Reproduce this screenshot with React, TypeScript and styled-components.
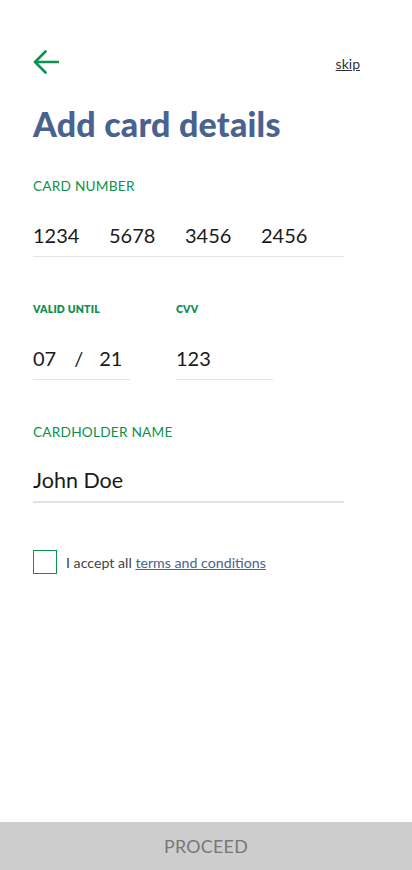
import styled, { createGlobalStyle } from "styled-components";

const GlobalStyle = createGlobalStyle`
  html, body {
    margin: 0;
    padding: 0;
    background: #fff;
  }
  body {
    font-family: Lato, "Noto Sans", sans-serif;
  }
`;

const Screen = styled.div`
  width: 412px;
  height: 870px;
  display: flex;
  flex-direction: column;
  background: #fff;
`;

const Content = styled.div`
  flex: 1;
  padding: 47px 52px 0 33px;
  display: flex;
  flex-direction: column;
`;

const TopBar = styled.div`
  display: flex;
  justify-content: space-between;
  align-items: center;
  height: 30px;
`;

const BackButton = styled.button`
  border: none;
  background: none;
  padding: 0;
  width: 26px;
  height: 26px;
  cursor: pointer;
  display: flex;
`;

const Skip = styled.a`
  font-size: 14px;
  color: #333;
  text-decoration: underline;
  margin-top: 2px;
`;

const Title = styled.h1`
  margin: 27px 0 0;
  font-size: 34px;
  font-weight: 900;
  color: #4a6290;
  letter-spacing: 0.2px;
  line-height: 40px;
`;

const Field = styled.div<{ $width?: number }>`
  display: flex;
  flex-direction: column;
  width: ${(p) => (p.$width ? `${p.$width}px` : "311px")};
`;

const Label = styled.div<{ $small?: boolean }>`
  color: #0b9150;
  font-size: ${(p) => (p.$small ? "10.5px" : "13.7px")};
  font-weight: ${(p) => (p.$small ? 800 : 400)};
  letter-spacing: 0.2px;
  line-height: 16px;
`;

const Value = styled.div<{ $thick?: boolean }>`
  display: flex;
  align-items: center;
  height: 41px;
  padding-bottom: 3px;
  margin-top: 22px;
  font-size: ${(p) => (p.$thick ? "21.5px" : "20px")};
  color: #1a1a1a;
  border-bottom: ${(p) => (p.$thick ? "2px solid #e2e2e2" : "1px solid #e5e5e5")};
  box-sizing: border-box;
`;

const Group = styled.span`
  width: 76px;
`;

const Slash = styled.span`
  margin: 0 16px 0 18px;
`;

const Row = styled.div`
  display: flex;
  gap: 46px;
`;

const Check = styled.label`
  display: flex;
  align-items: center;
  gap: 9px;
  margin-top: 47px;
  font-size: 14.2px;
  color: #444;
`;

const Box = styled.span`
  width: 24px;
  height: 24px;
  border: 1px solid #0b9150;
  box-sizing: border-box;
`;

const Terms = styled.a`
  color: #4a6290;
  text-decoration: underline;
`;

const Proceed = styled.button`
  height: 48px;
  border: none;
  background: #cdcdcd;
  color: #777;
  font-family: Lato, "Noto Sans", sans-serif;
  font-size: 17.8px;
  letter-spacing: 0.3px;
  width: 100%;
`;

export default function App() {
  return (
    <Screen>
      <GlobalStyle />
      <Content>
        <TopBar>
          <BackButton aria-label="back">
            <svg width="26" height="26" viewBox="0 0 26 26" fill="none">
              <path
                d="M25 13H2M12.5 2.5L2 13l10.5 10.5"
                stroke="#0b9150"
                strokeWidth="2.6"
                strokeLinecap="round"
                strokeLinejoin="round"
              />
            </svg>
          </BackButton>
          <Skip>skip</Skip>
        </TopBar>
        <Title>Add card details</Title>

        <Field style={{ marginTop: 34 }}>
          <Label>CARD NUMBER</Label>
          <Value>
            <Group>1234</Group>
            <Group>5678</Group>
            <Group>3456</Group>
            <Group>2456</Group>
          </Value>
        </Field>

        <Row style={{ marginTop: 44 }}>
          <Field $width={97}>
            <Label $small>VALID UNTIL</Label>
            <Value>
              07<Slash>/</Slash>21
            </Value>
          </Field>
          <Field $width={97}>
            <Label $small>CVV</Label>
            <Value>123</Value>
          </Field>
        </Row>

        <Field style={{ marginTop: 44 }}>
          <Label>CARDHOLDER NAME</Label>
          <Value $thick>John Doe</Value>
        </Field>

        <Check>
          <Box />
          <span>
            I accept all <Terms>terms and conditions</Terms>
          </span>
        </Check>
      </Content>
      <Proceed>PROCEED</Proceed>
    </Screen>
  );
}
